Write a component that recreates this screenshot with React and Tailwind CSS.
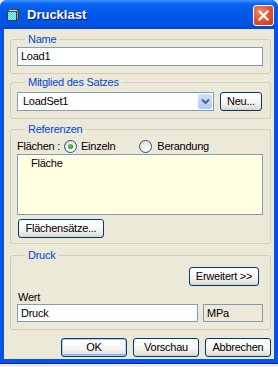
import React from "react";

const font = "font-['Liberation_Sans',Arial,sans-serif]";

const btn =
  "h-[19px] flex items-center justify-center rounded-[3px] border border-[#003C74] bg-[linear-gradient(to_bottom,#FFFFFF_0%,#F4F4F0_60%,#E3E0D6_90%,#D6D0C5_100%)] text-[11px] text-black leading-none";

function Group({ title, className = "", children }) {
  return (
    <fieldset className={`border border-[#D0D0BF] rounded-[3px] p-0 m-0 min-w-0 ${className}`}>
      <legend className="ml-[14px] px-[3px] text-[11px] leading-[14px] text-[#0046D5]">
        {title}
      </legend>
      <div className="pl-[6px] pr-[7px]">{children}</div>
    </fieldset>
  );
}

function Radio({ checked }) {
  return (
    <span className="w-[13px] h-[13px] rounded-full border border-[#1C5180] bg-[linear-gradient(135deg,#DCD9CF_0%,#FFFFFF_80%)] flex items-center justify-center">
      {checked && (
        <span className="w-[5px] h-[5px] rounded-full bg-[radial-gradient(circle_at_40%_40%,#5BD85B_0%,#21A121_70%)]" />
      )}
    </span>
  );
}

function WindowIcon() {
  return (
    <svg width="12" height="12" viewBox="0 0 12 12" shapeRendering="crispEdges">
      <defs>
        <pattern id="dith" width="2" height="2" patternUnits="userSpaceOnUse">
          <rect width="2" height="2" fill="#40D8E8" />
          <rect width="1" height="1" fill="#A0F4FF" />
          <rect x="1" y="1" width="1" height="1" fill="#A0F4FF" />
        </pattern>
      </defs>
      <polygon points="0.5,2.5 2.5,0.5 11.5,0.5 9.5,2.5" fill="#E8E8E8" stroke="#404040" strokeWidth="1" />
      <polygon points="9.5,2.5 11.5,0.5 11.5,9.5 9.5,11.5" fill="#8A8A8A" stroke="#404040" strokeWidth="1" />
      <rect x="0.5" y="2.5" width="9" height="9" fill="url(#dith)" stroke="#404040" strokeWidth="1" />
    </svg>
  );
}

export default function App() {
  return (
    <div className={`w-[278px] h-[367px] bg-[#F3E4EE] overflow-hidden ${font}`}>
      <div className="w-[278px] h-[364px] flex flex-col rounded-t-[7px] bg-[#0055E5] border-b border-[#0019CF]">
        {/* Title bar */}
        <div className="h-[29px] flex items-start rounded-t-[7px] bg-[linear-gradient(to_bottom,#3D95FF_0%,#0A62F2_14%,#0057E8_45%,#0055E5_80%,#0048D4_100%)]">
          <div className="ml-[7px] mt-[9px]">
            <WindowIcon />
          </div>
          <span className="ml-[8px] mt-[7px] text-[13px] font-bold text-white leading-[15px] [text-shadow:1px_1px_0_#0A1883]">
            Drucklast
          </span>
          <div className="ml-auto mr-[4px] mt-[5px] w-[21px] h-[21px] rounded-[3px] border border-white bg-[radial-gradient(circle_at_35%_30%,#F08A6A_0%,#E0512E_55%,#C2361A_100%)] flex items-center justify-center">
            <svg width="11" height="11" viewBox="0 0 11 11">
              <path d="M1.5 1.5 L9.5 9.5 M9.5 1.5 L1.5 9.5" stroke="white" strokeWidth="2.2" strokeLinecap="square" />
            </svg>
          </div>
        </div>

        {/* Body */}
        <div className="flex-1 mx-[4px] mb-[4px] bg-[#ECE9D8] pl-[6px] pr-[3px] flex flex-col text-[11px] text-black tracking-[-0.25px]">
          <Group title="Name" className="mt-[3px]">
            <div className="pt-[1px] pb-[7px]">
              <div className="h-[19px] border border-[#7F9DB9] bg-white flex items-center pl-[3px]">Load1</div>
            </div>
          </Group>

          <Group title="Mitglied des Satzes" className="mt-[1px]">
            <div className="pt-[3px] pb-[7px] flex gap-[6px]">
              <div className="w-[197px] h-[19px] border border-[#7F9DB9] bg-white flex items-stretch">
                <span className="flex-1 flex items-center pl-[5px]">LoadSet1</span>
                <span className="w-[14px] m-[1px] rounded-[2px] bg-[linear-gradient(to_bottom,#D2DEFC,#B6CAF8)] flex items-center justify-center">
                  <svg width="9" height="7" viewBox="0 0 9 7">
                    <path d="M1 1.5 L4.5 5 L8 1.5" fill="none" stroke="#4D6185" strokeWidth="2" />
                  </svg>
                </span>
              </div>
              <button className={`${btn} w-[42px]`}>Neu...</button>
            </div>
          </Group>

          <Group title="Referenzen" className="mt-[3px]">
            <div className="pb-[5px]">
              <div className="mt-[4px] h-[13px] flex items-center">
                <span>Flächen :</span>
                <span className="ml-[4px]"><Radio checked /></span>
                <span className="ml-[4px]">Einzeln</span>
                <span className="ml-[24px]"><Radio /></span>
                <span className="ml-[5px]">Berandung</span>
              </div>
              <div className="mt-[1px] h-[61px] border border-[#7F9DB9] bg-[#FFFFE1] pl-[13px] pt-[2px] leading-[13px]">
                Fläche
              </div>
              <button className={`${btn} w-[86px] mt-[4px] ml-[1px]`}>Flächensätze...</button>
            </div>
          </Group>

          <Group title="Druck" className="mt-[4px]">
            <div className="pb-[7px]">
              <div className="mt-[5px] flex justify-end pr-[4px]">
                <button className={`${btn} w-[70px]`}>Erweitert &gt;&gt;</button>
              </div>
              <div className="mt-[5px] leading-[13px] pl-[1px]">Wert</div>
              <div className="flex gap-[5px]">
                <div className="w-[181px] h-[18px] border border-[#7F9DB9] bg-white flex items-center pl-[3px]">Druck</div>
                <div className="flex-1 h-[18px] border border-[#7F9DB9] bg-[#ECE9D8] flex items-center pl-[3px]">MPa</div>
              </div>
            </div>
          </Group>

          <div className="mt-[8px] flex justify-end gap-[6px]">
            <button className={`${btn} w-[66px] shadow-[inset_0_0_0_1px_#B2CCF2,inset_0_-1px_0_1px_#8AAEE8]`}>OK</button>
            <button className={`${btn} w-[66px]`}>Vorschau</button>
            <button className={`${btn} w-[66px]`}>Abbrechen</button>
          </div>
        </div>
      </div>
    </div>
  );
}
